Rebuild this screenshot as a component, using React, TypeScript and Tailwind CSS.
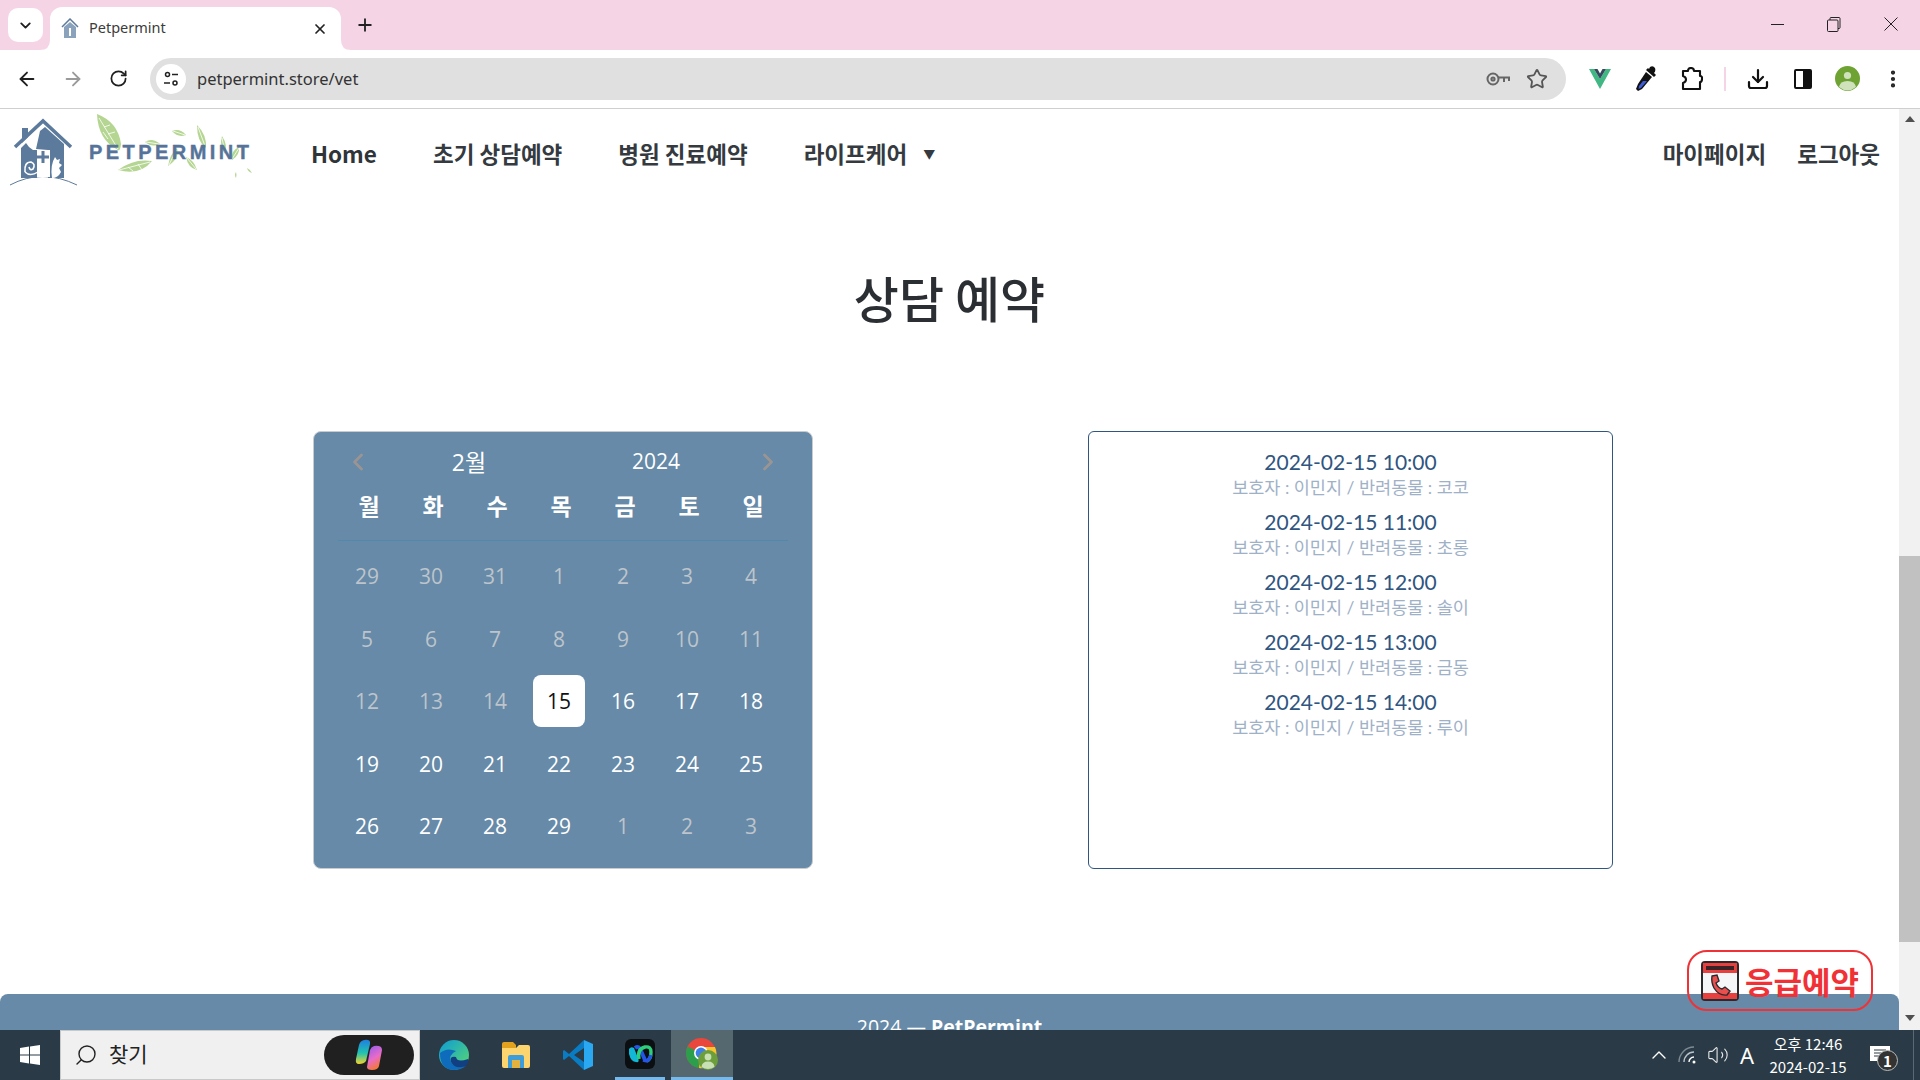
import React from "react";
import { ArrowLeft, ArrowRight, ChevronDown, ChevronLeft, ChevronRight, ChevronUp, Download, MoreVertical, Plus, RotateCw, Search, Star, Volume2, X } from "lucide-react";

const weekDays = ["월", "화", "수", "목", "금", "토", "일"];

const days = [
  { d: 29, off: true }, { d: 30, off: true }, { d: 31, off: true }, { d: 1, off: true }, { d: 2, off: true }, { d: 3, off: true }, { d: 4, off: true },
  { d: 5, off: true }, { d: 6, off: true }, { d: 7, off: true }, { d: 8, off: true }, { d: 9, off: true }, { d: 10, off: true }, { d: 11, off: true },
  { d: 12, off: true }, { d: 13, off: true }, { d: 14, off: true }, { d: 15, today: true }, { d: 16 }, { d: 17 }, { d: 18 },
  { d: 19 }, { d: 20 }, { d: 21 }, { d: 22 }, { d: 23 }, { d: 24 }, { d: 25 },
  { d: 26 }, { d: 27 }, { d: 28 }, { d: 29 }, { d: 1, off: true }, { d: 2, off: true }, { d: 3, off: true },
];

const bookings = [
  { time: "2024-02-15 10:00", pet: "코코" },
  { time: "2024-02-15 11:00", pet: "초롱" },
  { time: "2024-02-15 12:00", pet: "솔이" },
  { time: "2024-02-15 13:00", pet: "금동" },
  { time: "2024-02-15 14:00", pet: "루이" },
];

const Leaf = ({ d, vein }: { d: string; vein: string }) => (
  <g>
    <path d={d} fill="#b5d692" />
    <path d={vein} fill="none" stroke="#ffffff" strokeWidth="0.8" />
  </g>
);

// coordinates in this viewBox are the screen coordinates of the logo
const Logo = () => (
  <svg width="260" height="85" viewBox="0 109 260 85" className="shrink-0">
    <path d="M10 185 Q42 168 77 185" fill="none" stroke="#5b7a9c" strokeWidth="1" />
    <path d="M22 128h6v9l-6 6z" fill="#5b7a9c" />
    <path d="M15 147 L43 121 L71 147" fill="none" stroke="#5b7a9c" strokeWidth="3.5" />
    <path d="M21 148 L26 143 L29 147 L33 150 L38 150 L37 178 L21 178 Z" fill="#5b7a9c" />
    <path d="M40 131 L45 127 L64 144 V178 H48 V150 L36 149 L38 140 Z" fill="#5b7a9c" />
    <path d="M37 150 H50 V177 H37 Z" fill="#ffffff" />
    <path d="M41.5 151h3v4.5h4.5v3h-4.5v4.5h-3v-4.5h-4.5v-3h4.5z" fill="#5b7a9c" />
    <path d="M25 172 Q24 162 31 162 Q36 164 33 169 Q30 171 29 167" fill="none" stroke="#ffffff" strokeWidth="1.6" />
    <path d="M25 172 Q30 177 38 172" fill="none" stroke="#ffffff" strokeWidth="1.4" />
    <path d="M52 178 Q50 165 55 157 L57 160 L60 159 L59 163 L62 165 L59 168 L61 172 Q58 178 52 178 Z" fill="#ffffff" />
    <Leaf d="M97 114 Q118 122 121 144 Q120 152 118 150 Q98 140 97 114 Z" vein="M99 118 L118 149 M104 127 L110 125 M108 134 L115 132 M103 132 L108 139" />
    <Leaf d="M118 170 Q134 158 152 161 Q140 176 118 170 Z" vein="M119 170 L150 162 M128 167 L133 171 M138 164 L142 170" />
    <Leaf d="M145 142 Q152 137 160 144 Q152 148 145 142 Z" vein="M146 142 L159 144" />
    <Leaf d="M172 131 Q180 128 186 135 Q178 138 172 131 Z" vein="M173 131 L185 135" />
    <Leaf d="M197 125 Q207 135 206 148 Q197 142 197 125 Z" vein="M198 127 L205 146" />
    <Leaf d="M222 136 Q228 145 225 154 Q219 146 222 136 Z" vein="M222 138 L225 152" />
    <Leaf d="M168 166 Q170 154 177 148 Q180 158 168 166 Z" vein="M169 165 L176 150" />
    <Leaf d="M186 157 Q194 160 197 170 Q188 168 186 157 Z" vein="M187 158 L196 169" />
    <Leaf d="M232 160 Q240 155 239 147 Q231 150 232 160 Z" vein="M232 159 L239 148" />
    <Leaf d="M236 172 Q237 175 236 178 Q234 175 236 172 Z" vein="" />
    <Leaf d="M247 168 Q251 170 252 173 Q248 172 247 168 Z" vein="" />
    <text x="89" y="159" fontFamily="'Liberation Sans', sans-serif" fontWeight="700" fontSize="20" letterSpacing="3.45" stroke="#56739a" strokeWidth="0.4" fill="#56739a">PETPERMINT</text>
  </svg>
);

const EmergencyIcon = () => (
  <svg width="38" height="40" viewBox="0 0 38 40" className="shrink-0">
    <rect x="1" y="1" width="36" height="38" rx="3" fill="#f4f6f8" stroke="#2a2a2e" strokeWidth="2" />
    <rect x="2" y="2" width="34" height="10" fill="#e8403f" />
    <rect x="2" y="32" width="34" height="6" fill="#e8403f" />
    <rect x="5" y="5" width="28" height="4" fill="#3a2226" />
    <path d="M11 15 L16 14 L18 20 L15 22 Q17 27 21 28 L24 26 L29 30 L26 34 Q18 35 13 27 Q10 21 11 15 Z" fill="#e9504d" stroke="#2a2a2e" strokeWidth="1.4" />
  </svg>
);

const EdgeIcon = () => (
  <svg width="30" height="30" viewBox="0 0 30 30">
    <defs>
      <linearGradient id="edgeA" x1="0" y1="0" x2="1" y2="1">
        <stop offset="0" stopColor="#0c9ad8" />
        <stop offset="1" stopColor="#5cdb6c" />
      </linearGradient>
    </defs>
    <circle cx="15" cy="15" r="15" fill="url(#edgeA)" />
    <path d="M1 13 Q1 30 15 30 Q22 30 27 26 Q16 29 12 22 Q9 15 17 11 Q8 7 1 13 Z" fill="#0f6cbd" />
    <path d="M12 22 Q16 30 27 26 Q30 22 29 19 Q18 23 17 17 Q10 16 12 22 Z" fill="#123f82" />
  </svg>
);

const FolderIcon = () => (
  <svg width="28" height="26" viewBox="0 0 28 26">
    <path d="M0 2 Q0 0 2 0 H11 L14 3 H14 V8 H0 Z" fill="#e3a21e" />
    <path d="M0 6 H14 L17 3 H26 Q28 3 28 5 V24 Q28 26 26 26 H2 Q0 26 0 24 Z" fill="#fcd56f" />
    <path d="M6 26 V15 Q6 13 8 13 H20 Q22 13 22 15 V26 H18 V18 H10 V26 Z" fill="#3d9ddb" />
    <rect x="10" y="18" width="8" height="8" fill="#e3b13d" />
  </svg>
);

const VsCodeIcon = () => (
  <svg width="30" height="30" viewBox="0 0 30 30">
    <path d="M21 0 L30 4 V26 L21 30 V22 V8 Z" fill="#2aa8f2" />
    <path d="M6 14 L21 0 V8 L11 15 L21 22 V30 L6 16 L1 20 L0 19 V11 L1 10 Z" fill="#0a7cc4" />
  </svg>
);

const WebexIcon = () => (
  <svg width="30" height="30" viewBox="0 0 30 30">
    <rect width="30" height="30" rx="6" fill="#0b0f12" />
    <path d="M4 10 Q6 7 9 9 L13 19 Q15 24 11 23 Q6 23 4 15 Z" fill="#12b6d6" />
    <path d="M10 9 Q14 6 16 12 L20 21" fill="none" stroke="#2455e4" strokeWidth="4" />
    <path d="M14 20 Q12 10 20 8 Q26 7 26 13 Q26 20 22 22" fill="none" stroke="#2ecf7a" strokeWidth="3.4" />
    <path d="M18 21 L22 22 Q25 20 26 16" fill="none" stroke="#2455e4" strokeWidth="3.4" />
  </svg>
);

const ChromeIcon = () => (
  <svg width="32" height="32" viewBox="0 0 32 32">
    <circle cx="15" cy="15" r="15" fill="#e9463c" />
    <path d="M15 15 L1.5 8.5 A15 15 0 0 0 13 30 Z" fill="#2b9f4b" />
    <path d="M15 9 H29 A15 15 0 0 1 13 30 Z" fill="#f7c62f" />
    <circle cx="15" cy="15" r="7" fill="#fff" />
    <circle cx="15" cy="15" r="5.4" fill="#3d7fe8" />
    <circle cx="22" cy="22" r="10" fill="#6d9e3c" />
    <circle cx="22" cy="19" r="3.4" fill="#c9dfb4" />
    <path d="M15.5 29 Q16 23.5 22 23.5 Q28 23.5 28.5 29 Q22 33 15.5 29 Z" fill="#c9dfb4" />
  </svg>
);

const CopilotIcon = () => (
  <svg width="28" height="32" viewBox="0 0 28 32">
    <defs>
      <linearGradient id="copA" x1="0" y1="0" x2="0" y2="1">
        <stop offset="0" stopColor="#1e7fe0" />
        <stop offset="0.55" stopColor="#21c4b0" />
        <stop offset="1" stopColor="#f4d32c" />
      </linearGradient>
      <linearGradient id="copB" x1="0" y1="0" x2="0.4" y2="1">
        <stop offset="0" stopColor="#8b5cf0" />
        <stop offset="0.6" stopColor="#e96bc8" />
        <stop offset="1" stopColor="#f4783c" />
      </linearGradient>
    </defs>
    <path d="M9 1 Q16 0 15 5 L11 22 Q9 25 4 25 Q0 25 1 20 L4 6 Q5 2 9 1 Z" fill="url(#copA)" />
    <path d="M19 7 Q27 6 27 11 L24 27 Q23 31 17 31 Q12 31 12 28 L15 11 Q16 8 19 7 Z" fill="url(#copB)" />
  </svg>
);

export default function App() {
  return (
    <div className="flex h-screen w-full flex-col overflow-hidden bg-white font-['Noto_Sans_CJK_KR',sans-serif]">
      {/* tab strip */}
      <div className="relative flex h-[50px] shrink-0 bg-[#f5d5e5]">
        <div className="ml-2 mt-2 flex h-[34px] w-[35px] items-center justify-center rounded-[10px] bg-white">
          <ChevronDown size={17} strokeWidth={2.6} color="#1f1f1f" />
        </div>
        <div className="ml-[7px] mt-[7px] flex h-[43px] w-[291px] items-center rounded-t-[12px] bg-white pl-[11px]">
          <svg width="18" height="21" viewBox="0 0 18 21" className="shrink-0">
            <path d="M1 9 L9 1 L17 9" fill="none" stroke="#5b7a9c" strokeWidth="1.5" />
            <path d="M3 9 L9 4 L15 9 V20 H3 Z" fill="#8ba2bc" />
            <path d="M8 10 h2 v8 h-2z" fill="#fff" />
          </svg>
          <span className="-mt-[2px] ml-[10px] font-['Noto_Sans',sans-serif] text-[14.5px] text-[#3c3c3c]">Petpermint</span>
          <X size={16} strokeWidth={2.6} color="#222" className="ml-[146px]" />
        </div>
        <svg width="10" height="10" viewBox="0 0 10 10" className="absolute left-[40px] top-[40px]"><path d="M10 0 V10 H0 Q10 10 10 0 Z" fill="#fff" /></svg>
        <svg width="10" height="10" viewBox="0 0 10 10" className="absolute left-[341px] top-[40px]"><path d="M0 0 V10 H10 Q0 10 0 0 Z" fill="#fff" /></svg>
        <div className="ml-[10px] mt-[9px] flex h-[32px] w-[28px] items-center justify-center">
          <Plus size={20} strokeWidth={2.2} color="#222" />
        </div>
        <div className="ml-auto flex h-[48px]">
          <div className="flex w-[57px] items-center justify-center">
            <div className="h-px w-[13px] bg-[#222]" />
          </div>
          <div className="flex w-[56px] items-center justify-center">
            <svg width="14" height="15" viewBox="0 0 14 15" fill="none" stroke="#222"><rect x="0.5" y="3" width="10.5" height="11.5" rx="1" /><path d="M3 3V1.5q0-1 1-1h8q1 0 1 1v9q0 1-1 1h-1" /></svg>
          </div>
          <div className="flex w-[58px] items-center justify-center">
            <svg width="14" height="14" viewBox="0 0 14 14" stroke="#222"><path d="M0.5 0.5 L13.5 13.5 M13.5 0.5 L0.5 13.5" /></svg>
          </div>
        </div>
      </div>

      {/* toolbar */}
      <div className="flex h-[59px] shrink-0 items-center rounded-t-[10px] border-b border-[#cfcfcf] bg-white pb-[1px] pl-1">
        <div className="flex w-[46px] justify-center"><ArrowLeft size={22} strokeWidth={2} color="#1f1f1f" /></div>
        <div className="flex w-[46px] justify-center"><ArrowRight size={22} strokeWidth={2} color="#9a9a9a" /></div>
        <div className="flex w-[44px] justify-center"><RotateCw size={19} strokeWidth={2.2} color="#1f1f1f" /></div>
        <div className="ml-[10px] flex h-[42px] w-[1416px] items-center rounded-full bg-[#e0e0e0] pl-[6px]">
          <div className="flex h-[30px] w-[30px] items-center justify-center rounded-full bg-white">
            <svg width="16" height="16" viewBox="0 0 16 16" fill="none" stroke="#222" strokeWidth="1.5">
              <circle cx="4.5" cy="3.5" r="2" /><path d="M9 3.5h6M1 12h6" /><circle cx="12" cy="12" r="2" />
            </svg>
          </div>
          <span className="ml-[11px] mt-[2px] font-['Noto_Sans',sans-serif] text-[16.5px] text-[#333]">petpermint.store/vet</span>
          <div className="ml-auto flex items-center">
            <svg width="24" height="14" viewBox="0 0 24 14" fill="none" stroke="#666" strokeWidth="2">
              <circle cx="7" cy="7" r="5.5" /><circle cx="7" cy="7" r="1.6" /><path d="M12.5 5.5 H23 V9 M18 5.5 V10" />
            </svg>
            <Star size={22} strokeWidth={2} color="#555" className="ml-[16px] mr-[18px]" />
          </div>
        </div>
        <div className="ml-[11px] flex w-[46px] justify-center">
          <svg width="22" height="20" viewBox="0 0 22 20">
            <path d="M0 0 H5 L11 10 L17 0 H22 L11 20 Z" fill="#41b883" />
            <path d="M5 0 H8.5 L11 4.5 L13.5 0 H17 L11 10 Z" fill="#34495e" />
          </svg>
        </div>
        <div className="flex w-[46px] justify-center">
          <svg width="22" height="26" viewBox="0 0 22 26">
            <path d="M15 1 Q18 -1 20 2 Q21 5 19 7 L21 9 L19 11 L11 4 L13 2 L14 3 Z" fill="#111" />
            <path d="M11 6 L17 11 L7 23 L3 25 L1 23 L3 18 Z" fill="#111" />
            <path d="M8 15 L12 15 L6 22 L3.5 23 L4 20 Z" fill="#3c5bd6" />
          </svg>
        </div>
        <div className="flex w-[46px] justify-center">
          <svg width="22" height="24" viewBox="0 0 22 24" fill="none" stroke="#111" strokeWidth="2.1" strokeLinejoin="round">
            <path d="M2 4 H7 Q7 1 10 1 Q13 1 13 4 H19 V9 Q21.5 9 21 12 Q21 15 19 15 V22 H2 V16 Q5 15 5 12.5 Q5 10 2 9 Z" />
          </svg>
        </div>
        <div className="flex w-[20px] justify-center"><div className="h-[24px] w-[2px] bg-[#f5d5e5]" /></div>
        <div className="flex w-[45px] justify-center"><Download size={24} strokeWidth={2.2} color="#111" /></div>
        <div className="flex w-[45px] justify-center">
          <div className="flex h-[20px] w-[18px] overflow-hidden rounded-[2px] border-2 border-[#111]"><div className="w-1/2" /><div className="w-1/2 bg-[#111]" /></div>
        </div>
        <div className="flex w-[45px] justify-center">
          <svg width="25" height="25" viewBox="0 0 25 25">
            <circle cx="12.5" cy="12.5" r="12.5" fill="#6ea232" />
            <circle cx="12.5" cy="9.5" r="3.6" fill="#cfe2bb" />
            <path d="M4 21 Q5 15 12.5 15 Q20 15 21 21 Q12.5 28 4 21 Z" fill="#cfe2bb" />
          </svg>
        </div>
        <div className="flex w-[45px] justify-center"><MoreVertical size={22} strokeWidth={2.6} color="#222" /></div>
      </div>

      {/* page + scrollbar */}
      <div className="relative flex min-h-0 flex-1">
        <main className="min-w-0 flex-1 overflow-hidden">
          <nav className="flex h-[90px] items-center text-[22.5px] font-bold text-[#343a40]">
            <div className="w-[311px] shrink-0 self-start"><Logo /></div>
            <a className="w-[65px] whitespace-nowrap text-[22.5px] text-[#2f3438]">Home</a>
            <a className="ml-[57px]">초기 상담예약</a>
            <a className="ml-[56px]">병원 진료예약</a>
            <a className="ml-[56px]">라이프케어</a>
            <span className="ml-[16px] text-[12px] text-[#343a40]">▼</span>
            <a className="ml-auto">마이페이지</a>
            <a className="ml-[31px] mr-[19px]">로그아웃</a>
          </nav>

          <h1 className="mt-[59px] flex h-[78px] items-center justify-center text-[49px] font-medium text-[#2b2f33]">상담 예약</h1>

          <section className="mt-[95px] flex gap-[275px] pl-[313px]">
            <div className="h-[438px] w-[500px] rounded-[8px] border border-[#c8ccd0] bg-[#668aa7] pt-[10px] font-['Open_Sans','Noto_Sans_CJK_KR',sans-serif] text-white">
              <div className="flex h-[40px] items-center pl-[30px]">
                <ChevronLeft size={28} strokeWidth={2.4} color="#9a9594" className="w-[28px] shrink-0" />
                <span className="w-[194px] text-center text-[23px]">2월</span>
                <span className="w-[180px] text-center text-[21px]">2024</span>
                <ChevronRight size={28} strokeWidth={2.4} color="#9a9594" className="ml-[8px] w-[28px] shrink-0" />
              </div>
              <div className="ml-[23px] mt-[4px] grid h-[40px] grid-cols-[repeat(7,64px)] items-center text-center text-[23px] font-bold">
                {weekDays.map((w) => (
                  <span key={w}>{w}</span>
                ))}
              </div>
              <div className="mx-[24px] mt-[14px] h-px bg-[#5288ab]" />
              <div className="mt-[4px] grid auto-rows-[62.6px] grid-cols-[repeat(7,64px)] px-[21px] text-[21px]">
                {days.map((c, i) => (
                  <div key={i} className="flex items-center justify-center">
                    {c.today ? (
                      <span className="flex h-[52px] w-[52px] items-center justify-center rounded-[8px] bg-white text-[#111]">{c.d}</span>
                    ) : (
                      <span className={`mt-[1px] ${c.off ? "text-[#bdc4cc]" : "text-white"}`}>{c.d}</span>
                    )}
                  </div>
                ))}
              </div>
            </div>

            <div className="h-[438px] w-[525px] rounded-[6px] border border-[#2f5580] pt-[12px] text-center font-['Lato','Noto_Sans_CJK_KR',sans-serif]">
              {bookings.map((b) => (
                <div key={b.time} className="flex h-[60px] flex-col items-center">
                  <span className="h-[32px] text-[21px] leading-[36px] text-[#2f5580]">{b.time}</span>
                  <span className="text-[17.5px] leading-[24px] text-[#9fb1c7]">보호자 : 이민지 / 반려동물 : {b.pet}</span>
                </div>
              ))}
            </div>
          </section>

          <footer className="mt-[125px] h-[100px] rounded-t-[8px] bg-[#668aa7] pt-[20px] text-center font-['Open_Sans',sans-serif] text-[19.5px] leading-[26px] text-white">
            2024 — <b>PetPermint</b>
          </footer>
        </main>

        {/* page scrollbar */}
        <div className="flex w-[21px] shrink-0 flex-col items-center bg-[#f1f1f1]">
          <div className="mt-[7px] h-0 w-0 border-x-[5px] border-b-[6px] border-x-transparent border-b-[#505050]" />
          <div className="mt-[434px] h-[386px] w-full bg-[#c1c1c1]" />
          <div className="mt-[73px] h-0 w-0 border-x-[5px] border-t-[6px] border-x-transparent border-t-[#505050]" />
        </div>

        {/* floating emergency button */}
        <button className="absolute left-[1687px] top-[841px] flex h-[61px] w-[186px] items-center rounded-[20px] border-2 border-[#f03236] pl-[12px] text-[31px] font-bold text-[#f03236]">
          <EmergencyIcon />
          <span className="ml-[6px] whitespace-nowrap leading-none">응급예약</span>
        </button>
      </div>

      {/* windows taskbar */}
      <div className="flex h-[50px] shrink-0 items-stretch bg-[#2a3b47] text-white">
        <div className="flex w-[60px] items-center justify-center">
          <svg width="20" height="20" viewBox="0 0 20 20" fill="#fff">
            <path d="M0 3 L9 1.6 V9.5 H0 Z M10 1.4 L20 0 V9.5 H10 Z M0 10.5 H9 V18.4 L0 17 Z M10 10.5 H20 V20 L10 18.6 Z" />
          </svg>
        </div>
        <div className="flex w-[360px] items-center border-x border-y border-[#c9c9c9] bg-[#f0f0f0] pl-[13px] text-[#222]">
          <Search size={24} strokeWidth={1.4} color="#222" className="-scale-x-100" />
          <span className="-mt-[2px] ml-[11px] text-[21px]">찾기</span>
          <div className="ml-auto mr-[5px] flex h-[40px] w-[90px] items-center justify-center rounded-full bg-[#202020]">
            <CopilotIcon />
          </div>
        </div>
        <div className="ml-[3px] flex w-[62px] items-center justify-center"><EdgeIcon /></div>
        <div className="flex w-[62px] items-center justify-center"><FolderIcon /></div>
        <div className="flex w-[62px] items-center justify-center"><VsCodeIcon /></div>
        <div className="flex w-[62px] flex-col items-center">
          <div className="flex flex-1 items-center"><WebexIcon /></div>
          <div className="h-[3px] w-[50px] bg-[#76b9ed]" />
        </div>
        <div className="flex w-[62px] flex-col items-center bg-[#556870]">
          <div className="flex flex-1 items-center"><ChromeIcon /></div>
          <div className="h-[3px] w-full bg-[#76b9ed]" />
        </div>

        <div className="ml-auto flex items-center">
          <div className="flex w-[28px] justify-center"><ChevronUp size={24} strokeWidth={1.4} color="#fff" /></div>
          <div className="flex w-[32px] justify-center">
            <svg width="22" height="22" viewBox="0 0 22 22" fill="none" strokeWidth="1.4">
              <circle cx="16" cy="18" r="1.5" fill="#fff" />
              <path d="M11 18 A5 5 0 0 1 16 13" stroke="#fff" />
              <path d="M6 18 A10 10 0 0 1 16 8" stroke="#b9c2c8" />
              <path d="M1 18 A15 15 0 0 1 16 3" stroke="#7f8b93" />
            </svg>
          </div>
          <div className="flex w-[26px] justify-center"><Volume2 size={22} strokeWidth={1.2} color="#e8e8e8" /></div>
          <div className="flex w-[32px] justify-center font-['Noto_Sans',sans-serif] text-[22px]">A</div>
          <div className="flex w-[90px] flex-col items-center text-[15px] leading-[23px]">
            <span>오후 12:46</span>
            <span>2024-02-15</span>
          </div>
          <div className="relative flex w-[54px] justify-center">
            <svg width="20" height="18" viewBox="0 0 20 18" fill="#fff">
              <path d="M0 0 H20 V15 H0 Z" />
              <path d="M4 4 H16 M4 7 H16 M4 10 H16" stroke="#2a3b47" strokeWidth="1" />
            </svg>
            <span className="absolute left-[24px] top-[4px] flex h-[21px] w-[21px] items-center justify-center rounded-full border border-[#bbb] bg-[#333] text-[15px] font-bold leading-none">1</span>
          </div>
          <div className="flex h-full w-[13px] justify-center"><div className="h-full w-px bg-[#5a6a75]" /></div>
        </div>
      </div>
    </div>
  );
}
